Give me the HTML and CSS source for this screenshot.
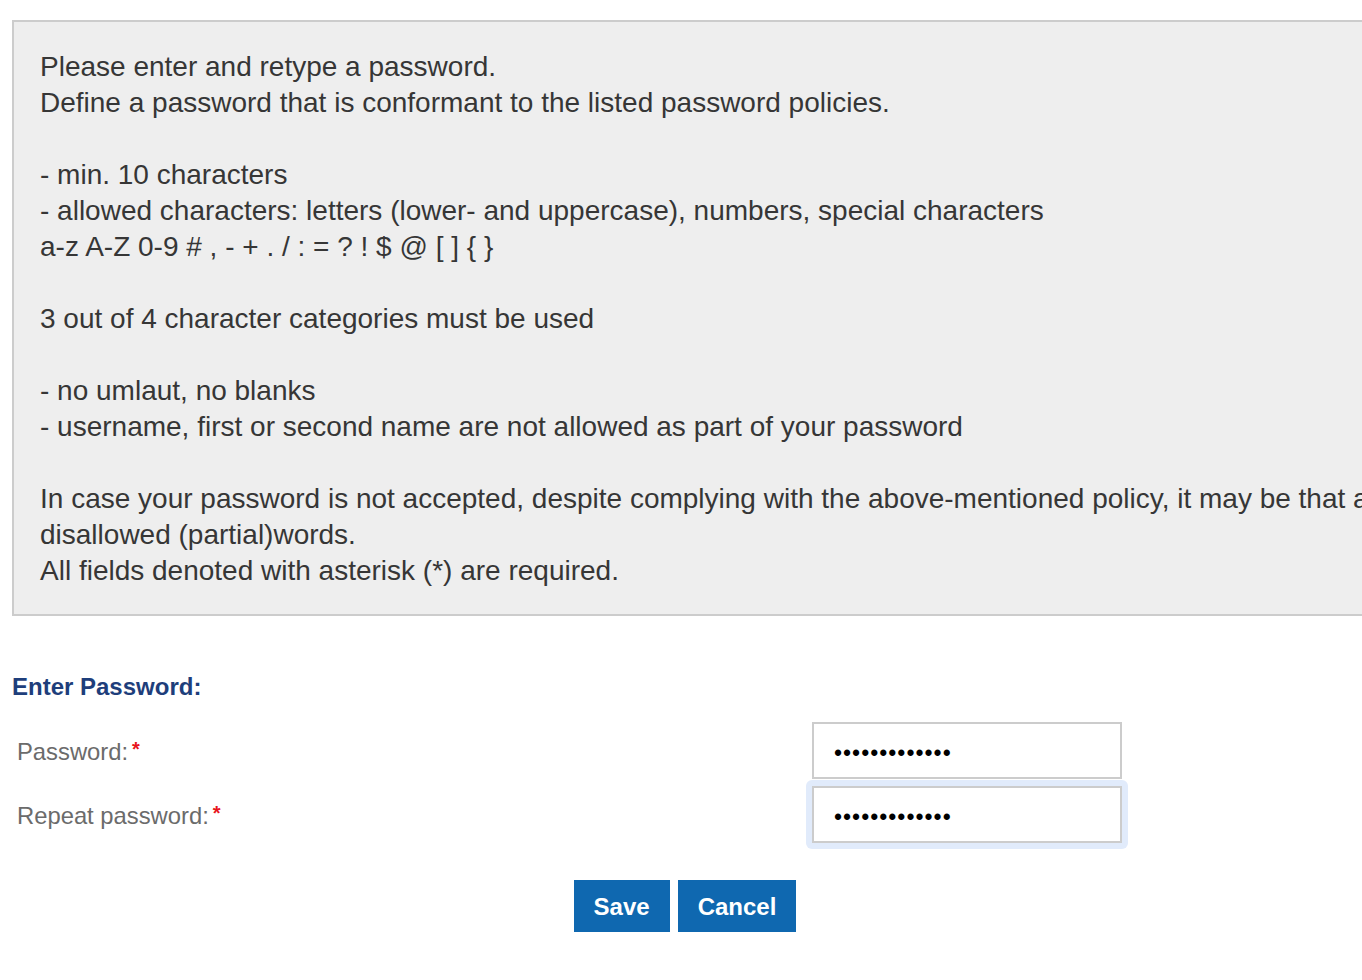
FILE: index.html
```html
<!DOCTYPE html>
<html>
<head>
<meta charset="utf-8">
<title>Enter Password</title>
<link rel="stylesheet" href="styles.css">
</head>
<body>
<div class="page">
  <div class="info">
    <p>Please enter and retype a password.<br>Define a password that is conformant to the listed password policies.</p>
    <p>- min. 10 characters<br>- allowed characters: letters (lower- and uppercase), numbers, special characters<br>a-z A-Z 0-9 # , - + . / : = ? ! $ @ [ ] { }</p>
    <p>3 out of 4 character categories must be used</p>
    <p>- no umlaut, no blanks<br>- username, first or second name are not allowed as part of your password</p>
    <p>In case your password is not accepted, despite complying with the above-mentioned policy, it may be that a word contains<br>disallowed (partial)words.<br>All fields denoted with asterisk (*) are required.</p>
  </div>
  <form class="form">
    <h2 class="heading">Enter Password:</h2>
    <div class="rows">
      <div class="row">
        <label class="label" for="pw1">Password:<span class="req">*</span></label>
        <span class="field"><input id="pw1" class="input" type="password" value="aaaaaaaaaaaaa"></span>
      </div>
      <div class="row">
        <label class="label" for="pw2">Repeat password:<span class="req">*</span></label>
        <span class="field focused"><input id="pw2" class="input" type="password" value="aaaaaaaaaaaaa"></span>
      </div>
    </div>
    <div class="buttons">
      <button type="button" class="btn">Save</button>
      <button type="button" class="btn">Cancel</button>
    </div>
  </form>
</div>
</body>
</html>
```
FILE: styles.css
```css
html, body {
  margin: 0;
  padding: 0;
  overflow: hidden;
  background: #fff;
}
body {
  font-family: "Liberation Sans", Arial, Helvetica, sans-serif;
  color: #363636;
}
.page {
  width: 1362px;
  overflow: hidden;
  padding: 20px 0 0 12px;
  box-sizing: border-box;
}
.info {
  width: 1500px;
  box-sizing: border-box;
  background: #eeeeee;
  border: 2px solid #cccccc;
  padding: 27px 26px 25px 26px;
  font-size: 28px;
  line-height: 36px;
  white-space: nowrap;
}
.info p {
  margin: 0 0 36px 0;
}
.info p:last-child {
  margin-bottom: 0;
}
.form {
  width: 1350px;
}
.heading {
  margin: 56px 0 20px 0;
  font-size: 24px;
  line-height: 30px;
  font-weight: bold;
  color: #1e3e7b;
}
.rows {
  display: flex;
  flex-direction: column;
  gap: 7px;
}
.row {
  display: flex;
  align-items: center;
  height: 57px;
}
.label {
  width: 795px;
  padding-left: 5px;
  padding-top: 2px;
  font-size: 23.8px;
  color: #6b6b6b;
}
.req {
  color: #e8141c;
  margin-left: 4px;
  font-weight: bold;
  font-size: 20px;
  position: relative;
  top: -4px;
}
.field {
  display: block;
  padding: 6px;
  margin: -6px;
  border-radius: 6px;
}
.field.focused {
  background: #e1ebfb;
}
.input {
  display: block;
  width: 310px;
  height: 57px;
  box-sizing: border-box;
  border: 2px solid #cccccc;
  border-radius: 0;
  background: #fff;
  padding: 5px 20px 0 20px;
  font-family: "Liberation Sans", Arial, sans-serif;
  font-size: 23px;
  letter-spacing: 1px;
  color: #000;
  outline: none;
}
.buttons {
  display: flex;
  justify-content: center;
  gap: 8px;
  margin-top: 37px;
  padding-right: 4px;
}
.btn {
  height: 52px;
  padding: 2px 20px 0 20px;
  border: none;
  border-radius: 0;
  background: #0f68b0;
  color: #fff;
  font-family: "Liberation Sans", Arial, sans-serif;
  font-size: 24px;
  font-weight: bold;
  cursor: pointer;
}
```
